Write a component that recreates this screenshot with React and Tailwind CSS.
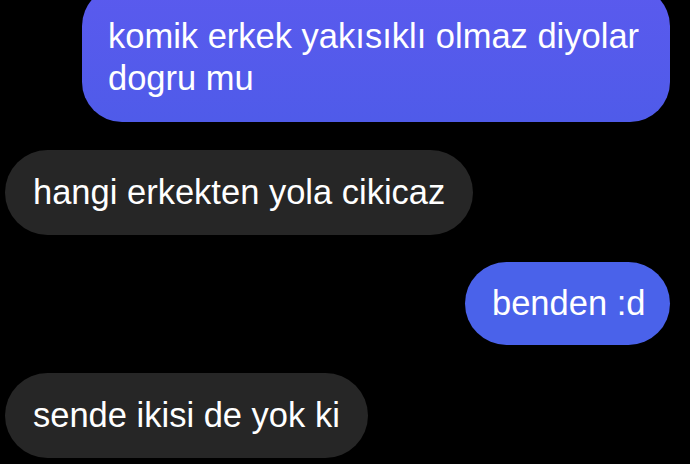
export default function App() {
  return (
    <div className="w-[690px] h-[464px] bg-black overflow-hidden flex flex-col text-white" style={{ fontFamily: '"Liberation Sans", Arial, sans-serif' }}>
      <div className="self-end mr-[20px] -mt-[14px] w-[588px] h-[136px] rounded-[40px] bg-gradient-to-b from-[#5a5aee] to-[#4f5be9] pl-[26px] pt-[29px] text-[34.5px] leading-[42px]">
        komik erkek yakısıklı olmaz diyolar<br />dogru mu
      </div>
      <div className="self-start ml-[5px] mt-[28px] w-[468px] h-[85px] rounded-full bg-[#262626] pl-[28px] flex items-center text-[34.5px]">
        hangi erkekten yola cikicaz
      </div>
      <div className="self-end mr-[20px] mt-[27px] w-[205px] h-[83px] rounded-full bg-[#4a62ea] pl-[27px] flex items-center text-[34.5px]">
        benden :d
      </div>
      <div className="self-start ml-[5px] mt-[28px] w-[363px] h-[85px] rounded-full bg-[#262626] pl-[28px] flex items-center text-[34.5px]">
        sende ikisi de yok ki
      </div>
    </div>
  );
}
